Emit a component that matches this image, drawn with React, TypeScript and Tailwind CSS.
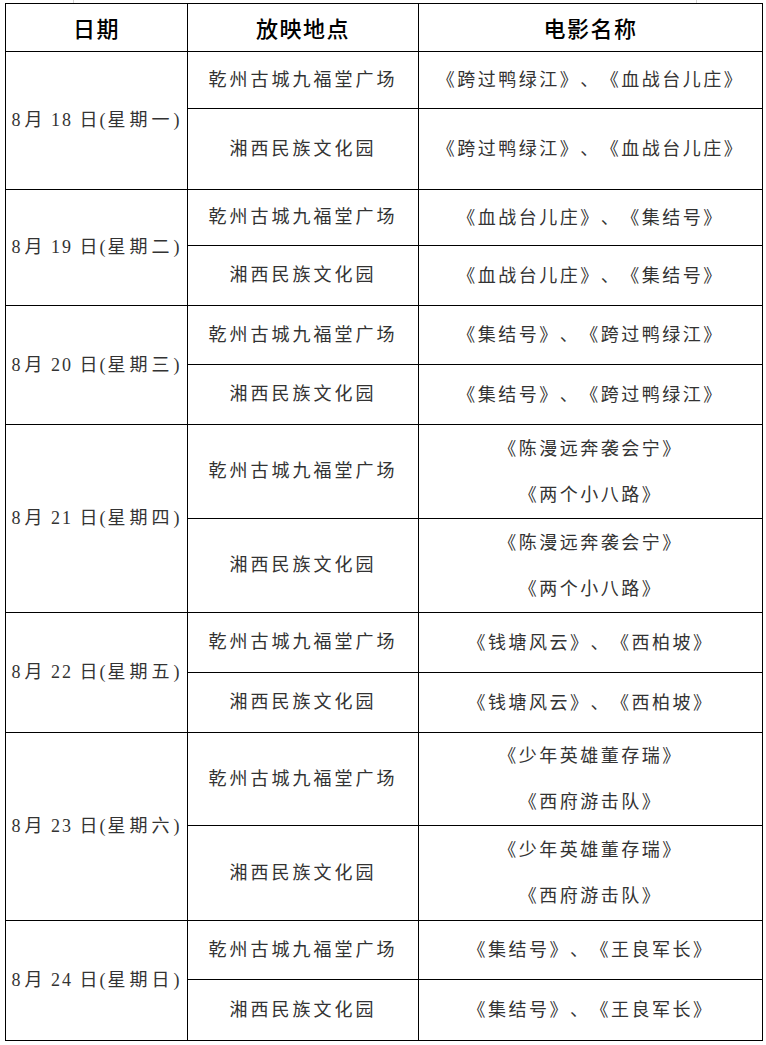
const venues = ["乾州古城九福堂广场", "湘西民族文化园"];

interface DayRow {
  day: string;
  week: string;
  films: string[][]; // per venue, one or more lines
}

const schedule: DayRow[] = [
  { day: "18", week: "星期一", films: [["《跨过鸭绿江》、《血战台儿庄》"], ["《跨过鸭绿江》、《血战台儿庄》"]] },
  { day: "19", week: "星期二", films: [["《血战台儿庄》、《集结号》"], ["《血战台儿庄》、《集结号》"]] },
  { day: "20", week: "星期三", films: [["《集结号》、《跨过鸭绿江》"], ["《集结号》、《跨过鸭绿江》"]] },
  {
    day: "21",
    week: "星期四",
    films: [
      ["《陈漫远奔袭会宁》", "《两个小八路》"],
      ["《陈漫远奔袭会宁》", "《两个小八路》"],
    ],
  },
  { day: "22", week: "星期五", films: [["《钱塘风云》、《西柏坡》"], ["《钱塘风云》、《西柏坡》"]] },
  {
    day: "23",
    week: "星期六",
    films: [
      ["《少年英雄董存瑞》", "《西府游击队》"],
      ["《少年英雄董存瑞》", "《西府游击队》"],
    ],
  },
  { day: "24", week: "星期日", films: [["《集结号》、《王良军长》"], ["《集结号》、《王良军长》"]] },
];

const body =
  "font-['Liberation_Serif','Noto_Sans_CJK_SC',serif] text-[18px] text-[#333] [text-spacing-trim:space-all]";

export default function App() {
  return (
    <div className="min-h-[1045px] w-[766px] bg-white">
      <div className="flex h-[3px]">
        <div className="ml-[73px] w-px bg-[#d4d4d4]" />
        <div className="ml-[622px] w-px bg-[#d4d4d4]" />
      </div>

      <div className="ml-[5px] grid w-[758px] grid-cols-[181px_230px_343px] grid-rows-[47px_56px_80px_55px_59px_58px_59px_93px_93px_59px_59px_92px_94px_58px_60px] gap-px bg-black p-px">
        <HeaderCell text="日期" />
        <HeaderCell text="放映地点" />
        <HeaderCell text="电影名称" />

        {schedule.map((d) => (
          <DayBlock key={d.day} row={d} />
        ))}
      </div>
    </div>
  );
}

function HeaderCell({ text }: { text: string }) {
  return (
    <div className="flex items-center justify-center bg-white font-['Noto_Sans_CJK_SC',sans-serif] text-[22px] font-medium tracking-[1.5px] text-black">
      {text}
    </div>
  );
}

function DayBlock({ row }: { row: DayRow }) {
  return (
    <>
      <div className={`row-span-2 flex items-center justify-center bg-white ${body}`}>
        <span className="tracking-[2px]">
          8<span className="ml-[2px]">月</span> {row.day} 日(<span className="tracking-[4px]">{row.week}</span>)
        </span>
      </div>
      {venues.map((v, i) => (
        <Venue key={v} venue={v} films={row.films[i]} first={i === 0} />
      ))}
    </>
  );
}

function Venue({ venue, films, first }: { venue: string; films: string[]; first: boolean }) {
  return (
    <>
      <div className={`flex items-center justify-center bg-white tracking-[3px] ${body} ${first ? "" : "col-start-2"}`}>
        {venue}
      </div>
      <div className={`flex flex-col items-center justify-center bg-white leading-[46px] tracking-[2.5px] ${body}`}>
        {films.map((f) => (
          <span key={f}>{f}</span>
        ))}
      </div>
    </>
  );
}
